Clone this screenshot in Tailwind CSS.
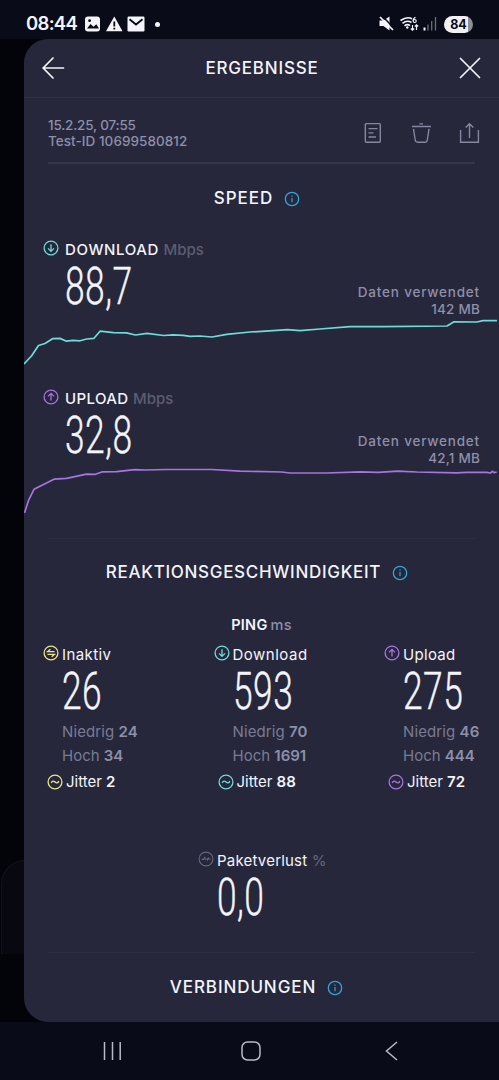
<!DOCTYPE html>
<html lang="de">
<head>
    <meta charset="UTF-8">
    <meta name="viewport" content="width=device-width, initial-scale=1.0">
    <title>Ergebnisse</title>
    <script src="https://cdn.jsdelivr.net/npm/@tailwindcss/browser@4"></script>
</head>
<body class="bg-[#030409] font-['Inter',sans-serif] text-[#f4f4fa] overflow-hidden whitespace-nowrap">
    <!-- Icon sprites -->
    <svg class="hidden">
        <symbol id="info" viewBox="0 0 16 16" fill="none" stroke="#36a3d6">
            <circle cx="8" cy="8" r="6.7" stroke-width="1.3" />
            <path d="M8 7v4.2M8 4.6v1.1" stroke-width="1.2" />
        </symbol>
        <symbol id="down" viewBox="0 0 16 16" fill="none" stroke="#6fdcd8" stroke-width="1.3">
            <circle cx="8" cy="8" r="6.9" />
            <path d="M8 4.3v7M5 8.4l3 3 3-3" />
        </symbol>
        <symbol id="up" viewBox="0 0 16 16" fill="none" stroke="#a774e0" stroke-width="1.3">
            <circle cx="8" cy="8" r="6.9" />
            <path d="M8 11.6v-7M5 7.4l3-3 3 3" />
        </symbol>
        <symbol id="idle" viewBox="0 0 16 16" fill="none" stroke="#ece58e" stroke-width="1.3">
            <circle cx="8" cy="8" r="6.9" />
            <path d="M11.6 6.7H4.5l2.9-2.5M4.4 9.3h7.1l-2.9 2.5" />
        </symbol>
        <symbol id="wave" viewBox="0 0 16 16" fill="none" stroke="currentColor" stroke-width="1.3">
            <circle cx="8" cy="8" r="6.9" />
            <path d="M4.2 9C5 6.600 6.600 6.600 8 8s3 1.400 3.800-1" />
        </symbol>
        <symbol id="loss" viewBox="0 0 16 16" fill="none" stroke="#66677c" stroke-width="1.1">
            <circle cx="8" cy="8" r="6.9" />
            <path d="M3.6 8.4h1.9l1.3-1.8.6 2.200M8.8 7.400l.5 1.600 1.1-2 .8 1.200h1.4" />
        </symbol>
    </svg>

    <div class="h-[1080px] flex flex-col">
        <!-- Status bar -->
        <header class="h-[39px] shrink-0 bg-[#090b18] flex items-center justify-between pl-[26px] pr-[26px] pt-[9px]">
            <div class="flex items-center">
                <span class="w-[59px] text-[18.500px] font-semibold tracking-[-0.7px]">08:44</span>
                <svg class="w-[72px] h-4" viewBox="85 16 72 16" fill="#f4f4fa">
                    <rect x="85" y="16.5" width="15" height="15" rx="3" />
                    <path d="M87 28.5l3.5-4.5 3 2.7 2.8-2.5 2.7 4.3z" fill="#090b18" />
                    <circle cx="89.6" cy="20.7" r="1.4" fill="#090b18" />
                    <path d="M114.3 16.5l8.2 14.7h-16.5z" />
                    <path d="M114.3 21.5v5M114.3 27.8v1.7" stroke="#090b18" stroke-width="1.8" />
                    <rect x="127.500" y="16.500" width="17" height="15" rx="1.200" />
                    <path d="M129.500 19.300l6.500 5.300 6.500-5.300" fill="none" stroke="#090b18" stroke-width="1.900" />
                </svg>
                <span class="size-1.25 rounded-full bg-[#f4f4fa] -ml-0.5"></span>
            </div>
            <div class="flex items-center gap-1.5">
                <svg class="w-[60px] h-4" viewBox="379 16 60 16" fill="none" stroke="#f4f4fa">
                    <path d="M380.500 20.500h4l6-4v14l-6-4.500h-4z" fill="#f4f4fa" stroke="none" />
                    <path d="M383.300 16l12 12.500" stroke="#090b18" stroke-width="1.500" />
                    <path d="M381 17l13 13" stroke-width="1.700" />
                    <path d="M401.500 20.500q6.500-4.500 11.500-1.800M403.500 23.300q4.500-3.600 9-.8M405.500 25.800q3-2.200 5.500-.2" stroke-width="1.600" />
                    <circle cx="408.300" cy="27.500" r="1.200" fill="#f4f4fa" stroke="none" />
                    <path d="M416.500 17.300q-2.500 1-2.300 3.600" stroke-width="1.200" />
                    <circle cx="415.700" cy="21" r="1.500" stroke-width="1.200" />
                    <path d="M413.500 25v5M411.800 28.500l1.700 1.700 1.700-1.700M417.500 30v-5M415.800 26.500l1.700-1.700 1.700 1.700" stroke-width="1.200" />
                    <path d="M425.500 27.500V30.500" stroke-width="2" />
                    <path d="M429 24.500v6M432.700 21v9.500M436.500 17v13.500" stroke="#6c6d78" stroke-width="1.300" />
                </svg>
                <div class="w-[29px] h-[17px] rounded-full bg-linear-to-r from-[#f1f1f4] from-84% to-[#8d8d95] to-84% text-[#090b18] text-[12.5px] font-bold leading-[17px] text-center">84</div>
            </div>
        </header>

        <!-- Results panel -->
        <div class="relative h-[983px]">
            <div class="absolute left-[1px] top-[821px] w-12 h-[94px] rounded-tl-[24px] border-l border-t border-[#12131c] bg-[#080910]"></div>

            <main class="relative ml-6 h-[983px] rounded-l-[24px] bg-[#26273b] overflow-hidden">
                <div class="h-[59px] border-b border-[#303145] flex items-center justify-between pl-[18px] pr-[18px]">
                    <svg class="w-[23px] h-6" viewBox="0 0 23 24" fill="none" stroke="currentColor" stroke-width="1.700" stroke-linecap="round">
                        <path d="M21.500 12H1.500M11 2L1.200 12 11 22" />
                    </svg>
                    <h1 class="text-[17px] font-medium tracking-[0.8px] pt-px">ERGEBNISSE</h1>
                    <svg class="w-[22px] h-6" viewBox="0 0 22 24" fill="none" stroke="currentColor" stroke-width="1.700" stroke-linecap="round">
                        <path d="M1.500 2.500l19 19M20.500 2.500l-19 19" />
                    </svg>
                </div>

                <div class="h-[66px] ml-6 mr-[24px] border-b-2 border-[#35364b] flex items-center justify-between pt-[5px]">
                    <div class="text-[13.500px] leading-[16.500px] font-medium text-[#8e8fa9] pt-px">
                        <p class="tracking-[-0.2px]">15.2.25, 07:55</p>
                        <p class="tracking-[0.05px]">Test-ID 10699580812</p>
                    </div>
                    <svg class="w-[116px] h-[22px] -mr-[5px]" viewBox="364 122 116 22" fill="none" stroke="#8587a1" stroke-width="1.400">
                        <rect x="365.300" y="123.600" width="15" height="18.600" rx="1" />
                        <path d="M368.500 128.600h9M368.500 132.900h5M368.500 137h7.500" />
                        <path d="M412 126.500h19M419.500 123.900h3.500M413.500 128.800l1.700 11.200q.3 2.200 2.300 2.200h7.500q2 0 2.300-2.200l1.700-11.200" />
                        <path d="M460.600 130v12.300h17.800V130M469.500 138v-14M465.700 127.500l3.800-3.800 3.800 3.800" />
                    </svg>
                </div>

                <!-- Speed -->
                <div class="h-[69px] flex items-center justify-center gap-[11px] pr-[9px]">
                    <h2 class="text-[17px] font-medium tracking-[1px]">SPEED</h2>
                    <svg class="size-4"><use href="#info" /></svg>
                </div>

                <section class="h-[149px] flex flex-col">
                    <div class="h-[83px] pl-[19px] pr-[19px] pt-[6px] flex justify-between">
                        <div class="flex gap-1.5">
                            <svg class="size-4 mt-[1px]"><use href="#down" /></svg>
                            <div>
                                <p class="text-[15px] leading-[22px] font-medium tracking-[0.6px]">DOWNLOAD <span class="text-[#5c5d71] tracking-[0px]">Mbps</span></p>
                                <p class="font-['Roboto',sans-serif] text-[52px] leading-[52px] font-light tracking-[0.7px] [-webkit-text-stroke:0.4px] origin-left scale-x-[0.68] w-0">88,7</p>
                            </div>
                        </div>
                        <div class="text-right self-end text-[13.500px] leading-[16.500px] font-medium text-[#8e8fa9] -mb-px">
                            <p class="tracking-[0.8px]">Daten verwendet</p>
                            <p class="tracking-[0.2px]">142 MB</p>
                        </div>
                    </div>
                    <svg class="w-[475px] h-[55px]" viewBox="24 316 475 55" fill="none" stroke="#6fdcd8" stroke-width="1.700" stroke-linejoin="round">
                        <path d="M24 364L31.500 356L38.500 345.500L45 343.500L52.500 338.700L60 338.400L66.500 341.200L73 340.300L80 340.800L86.700 339L94 338.300L100 331.200L113.500 332.600L126.500 332.800L135.500 335L147 333.400L163.500 335.500L173 334.800L183.500 335.400L190 336.400L200 336L212 337L226.700 334.300L250 332L273 330.700L287.500 329.700L300 330.600L320 329L350 326.600L383 326.600L447 326L454 321.800L476.700 322L483 320.700L497 320.600" />
                    </svg>
                </section>

                <section class="h-[157px] flex flex-col">
                    <div class="h-[83px] pl-[19px] pr-[19px] pt-[6px] flex justify-between">
                        <div class="flex gap-1.5">
                            <svg class="size-4 mt-[1px]"><use href="#up" /></svg>
                            <div>
                                <p class="text-[15px] leading-[22px] font-medium tracking-[0.4px]">UPLOAD <span class="text-[#5c5d71] tracking-[0px]">Mbps</span></p>
                                <p class="font-['Roboto',sans-serif] text-[52px] leading-[52px] font-light tracking-[0.7px] [-webkit-text-stroke:0.4px] origin-left scale-x-[0.68] w-0">32,8</p>
                            </div>
                        </div>
                        <div class="text-right self-end text-[13.500px] leading-[16.500px] font-medium text-[#8e8fa9] -mb-px">
                            <p class="tracking-[0.8px]">Daten verwendet</p>
                            <p class="tracking-[0.2px]">42,1 MB</p>
                        </div>
                    </div>
                    <svg class="w-[475px] h-[55px]" viewBox="24 465 475 55" fill="none" stroke="#a774e0" stroke-width="1.700" stroke-linejoin="round">
                        <path d="M24.500 513L28.500 500.500L34 489.300L40.500 486L54 479.200L66.500 478.300L86.500 474.200L95.500 474.300L102.500 471.800L116.500 471.700L135 469.700L145 470L167 469.500L211.500 469.500L240 471.200L281.500 472L290 473L326.700 473L360 471.900L378 472.400L398 471.200L416.700 472L456.700 472.800L466.700 472.300L487 472.300L490.300 473L492.700 471.300L494 472.700L496.700 472" />
                    </svg>
                    <div class="mt-auto mx-6 border-b border-[#2d2e43]"></div>
                </section>

                <!-- Responsiveness -->
                <div class="h-[68px] flex items-center justify-center gap-[11px] pr-[9px]">
                    <h2 class="text-[17px] font-medium tracking-[0.7px]">REAKTIONSGESCHWINDIGKEIT</h2>
                    <svg class="size-4"><use href="#info" /></svg>
                </div>
                <p class="h-[36px] text-center text-[14.500px] leading-[36px] font-semibold tracking-[0.3px]">PING<span class="font-medium text-[#8e8fa9] pl-[3px]">ms</span></p>

                <section class="h-[202px] pl-[19px] grid grid-cols-[170.5px_170.5px_110px]">
                    <div>
                        <div class="flex gap-[3px] pt-[1px]">
                            <svg class="size-4 mt-[1px]"><use href="#idle" /></svg>
                            <div>
                                <p class="text-[15px] leading-[22px] tracking-[0.4px]">Inaktiv</p>
                                <p class="font-['Roboto',sans-serif] text-[52px] leading-[52px] font-light tracking-[0.7px] [-webkit-text-stroke:0.4px] origin-left scale-x-[0.68] w-0">26</p>
                                <div class="text-[15px] leading-6 text-[#7a7b92] pt-[2px]">
                                    <p class="tracking-[0.1px]">Niedrig <b class="font-semibold text-[#8e8fa9]">24</b></p>
                                    <p>Hoch <b class="font-semibold text-[#8e8fa9]">34</b></p>
                                </div>
                            </div>
                        </div>
                        <div class="flex items-center gap-[3px] pl-1 pt-[2px] text-[#ece58e]">
                            <svg class="size-4"><use href="#wave" /></svg>
                            <p class="text-[15px] leading-6 text-[#f4f4fa]">Jitter <b class="font-semibold">2</b></p>
                        </div>
                    </div>
                    <div>
                        <div class="flex gap-[3px] pt-[1px]">
                            <svg class="size-4 mt-[1px]"><use href="#down" /></svg>
                            <div>
                                <p class="text-[15px] leading-[22px] tracking-[0.5px]">Download</p>
                                <p class="font-['Roboto',sans-serif] text-[52px] leading-[52px] font-light tracking-[0.7px] [-webkit-text-stroke:0.4px] origin-left scale-x-[0.68] w-0">593</p>
                                <div class="text-[15px] leading-6 text-[#7a7b92] pt-[2px]">
                                    <p class="tracking-[0.1px]">Niedrig <b class="font-semibold text-[#8e8fa9]">70</b></p>
                                    <p>Hoch <b class="font-semibold text-[#8e8fa9]">1691</b></p>
                                </div>
                            </div>
                        </div>
                        <div class="flex items-center gap-[3px] pl-1 pt-[2px] text-[#6fdcd8]">
                            <svg class="size-4"><use href="#wave" /></svg>
                            <p class="text-[15px] leading-6 text-[#f4f4fa]">Jitter <b class="font-semibold">88</b></p>
                        </div>
                    </div>
                    <div>
                        <div class="flex gap-[3px] pt-[1px]">
                            <svg class="size-4 mt-[1px]"><use href="#up" /></svg>
                            <div>
                                <p class="text-[15px] leading-[22px] tracking-[0.3px]">Upload</p>
                                <p class="font-['Roboto',sans-serif] text-[52px] leading-[52px] font-light tracking-[0.7px] [-webkit-text-stroke:0.4px] origin-left scale-x-[0.68] w-0">275</p>
                                <div class="text-[15px] leading-6 text-[#7a7b92] pt-[2px]">
                                    <p class="tracking-[0.1px]">Niedrig <b class="font-semibold text-[#8e8fa9]">46</b></p>
                                    <p>Hoch <b class="font-semibold text-[#8e8fa9]">444</b></p>
                                </div>
                            </div>
                        </div>
                        <div class="flex items-center gap-[3px] pl-1 pt-[2px] text-[#a774e0]">
                            <svg class="size-4"><use href="#wave" /></svg>
                            <p class="text-[15px] leading-6 text-[#f4f4fa]">Jitter <b class="font-semibold">72</b></p>
                        </div>
                    </div>
                </section>

                <!-- Packet loss -->
                <section class="h-[107px] pl-[174px] pt-[5px] flex gap-[3px]">
                    <svg class="size-4 mt-[1px]"><use href="#loss" /></svg>
                    <div>
                        <p class="text-[15px] leading-[22px] tracking-[0.2px]">Paketverlust <span class="text-[#66677c] tracking-[-1px]">%</span></p>
                        <p class="font-['Roboto',sans-serif] text-[52px] leading-[52px] font-light tracking-[0.7px] [-webkit-text-stroke:0.4px] origin-left scale-x-[0.68] w-0">0,0</p>
                    </div>
                </section>

                <div class="ml-6 mr-[24px] h-[70px] border-t border-[#2d2e43] flex items-center justify-center gap-[11px] pr-[10px]">
                    <h2 class="text-[17px] font-medium tracking-[0.9px]">VERBINDUNGEN</h2>
                    <svg class="size-4"><use href="#info" /></svg>
                </div>
            </main>
        </div>

        <!-- Navigation bar -->
        <nav class="h-[58px] bg-[#090b18] flex items-center justify-between pl-[103px] pr-[101px]">
            <svg class="w-[19px] h-5" viewBox="0 0 19 20" stroke="#b9bac6" stroke-width="1.500">
                <path d="M1.500 1v18M9.500 1v18M17.200 1v18" />
            </svg>
            <svg class="size-5 mr-[5px]" viewBox="0 0 20 20" fill="none" stroke="#b9bac6" stroke-width="1.500">
                <rect x="1" y="1" width="18" height="18" rx="5.500" />
            </svg>
            <svg class="w-[13px] h-5" viewBox="0 0 13 20" fill="none" stroke="#b9bac6" stroke-width="1.500">
                <path d="M12 1L1.500 10 12 19" />
            </svg>
        </nav>
    </div>
</body>
</html>
